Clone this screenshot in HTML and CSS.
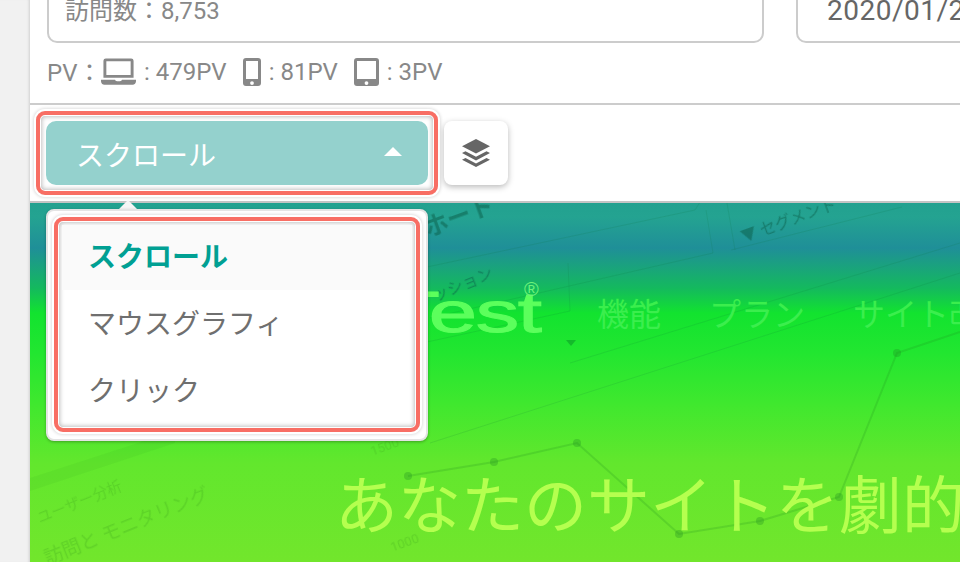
FILE: index.html
```html
<!DOCTYPE html>
<html lang="ja">
<head>
<meta charset="utf-8">
<title>ヒートマップ</title>
<link rel="stylesheet" href="styles.css">
</head>
<body>
<div class="page">
  <aside class="gutter"></aside>
  <main class="panel">
    <section class="summary">
      <div class="fields">
        <div class="field field-visits"><span class="field-text">訪問数：8,753</span></div>
        <div class="field field-date"><span class="field-text date-text">2020/01/25</span></div>
      </div>
      <div class="pv-row">
        <span class="pv-label">PV：</span>
        <svg class="ico ico-laptop" viewBox="0 0 36 28"><path fill="#888" fill-rule="evenodd" d="M5 0h26a2.500 2.500 0 0 1 2.500 2.500V20H2.500V2.500A2.500 2.500 0 0 1 5 0zm.5 3v14h25V3zM0 22h14.500c.3 1 1 1.500 2 1.500h3c1 0 1.700-.5 2-1.500H36v1.500c0 2-1.500 3.500-3.500 3.500h-29C1.500 27 0 25.500 0 23.500z"/></svg>
        <span class="pv-val">: 479PV</span>
        <svg class="ico ico-phone" viewBox="0 0 18 28"><path fill="#888" fill-rule="evenodd" d="M3 0h12a3 3 0 0 1 3 3v22a3 3 0 0 1-3 3H3a3 3 0 0 1-3-3V3a3 3 0 0 1 3-3zm0 3v18h12V3zm6 20.200a1.900 1.900 0 1 0 0 3.800 1.900 1.900 0 0 0 0-3.800z"/></svg>
        <span class="pv-val">: 81PV</span>
        <svg class="ico ico-tablet" viewBox="0 0 25 28"><path fill="#888" fill-rule="evenodd" d="M3 0h19a3 3 0 0 1 3 3v22a3 3 0 0 1-3 3H3a3 3 0 0 1-3-3V3a3 3 0 0 1 3-3zm0 3v18h19V3zm9.500 20.200a1.900 1.900 0 1 0 0 3.800 1.900 1.900 0 0 0 0-3.800z"/></svg>
        <span class="pv-val">: 3PV</span>
      </div>
    </section>
    <section class="toolbar">
      <div class="highlight highlight-select">
        <button class="select-btn" type="button">
          <span>スクロール</span>
          <span class="caret"></span>
        </button>
      </div>
      <button class="layers-btn" type="button" aria-label="レイヤー">
        <svg viewBox="0 0 30 28" width="30" height="28"><path fill="#666" d="M15 0l14 7.300-14 7.300L1 7.300z"/><path fill="#666" d="M4.500 12.200l10.500 5.500 10.500-5.500 3.500 1.900-14 7.300-14-7.300z"/><path fill="#666" d="M4.500 18.900l10.500 5.500 10.500-5.500 3.500 1.900L15 28 1 20.800z"/></svg>
      </button>
    </section>
    <section class="heatmap">
      <div class="heat-clip">
        <div class="shot s1">ホート</div>
        <div class="shot s2">▼ セグメント</div>
        <div class="shot s3">ッション</div>
        <div class="shot s4">ユーザー分析</div>
        <div class="shot s5">訪問と モニタリング</div>
        <div class="shot s6">1500</div>
        <div class="shot s7">1000</div>
        <svg class="chart" viewBox="0 0 930 359" width="930" height="359">
          <g fill="none" stroke="#0b6e3a" stroke-opacity=".14" stroke-width="1">
            <path d="M397 64L665 7L676 -10M676 7L683 50L400 115M701 47L872 4M705 47L697 0M400 240L930 70M300 160L540 108L538 60"/>
            <path d="M830 -5L930 -25M540 160L930 40"/>
          </g>
          <path d="M378 273L464 259L547 240L649 331L730 318L809 294L867 150L930 129" fill="none" stroke="#1f8a20" stroke-opacity=".2" stroke-width="2"/>
          <g fill="#1f8a20" fill-opacity=".3">
            <circle cx="378" cy="273" r="4"/><circle cx="464" cy="259" r="4"/><circle cx="547" cy="240" r="4"/><circle cx="649" cy="331" r="4"/><circle cx="730" cy="318" r="4"/><circle cx="809" cy="294" r="4"/><circle cx="867" cy="150" r="4"/>
          </g>
          <path d="M536 137h10l-5 6z" fill="#10a82a" fill-opacity=".7"/>
          <path d="M0 275L145 228V240L0 288z" fill="#1f8a20" fill-opacity=".07"/>
        </svg>
        <div class="site-logo">Test</div>
        <div class="site-reg">®</div>
        <nav class="site-nav"><span>機能</span><span>プラン</span><span>サイト改善</span></nav>
        <div class="site-headline">あなたのサイトを劇的に</div>
      </div>
      <div class="menu-arrow"></div>
      <div class="menu">
        <div class="highlight highlight-menu">
          <ul class="menu-list">
            <li class="menu-item is-active">スクロール</li>
            <li class="menu-item">マウスグラフィ</li>
            <li class="menu-item">クリック</li>
          </ul>
        </div>
      </div>
    </section>
  </main>
</div>
</body>
</html>
```
FILE: styles.css
```css
* { box-sizing: border-box; }
html, body { margin: 0; height: 100%; overflow: hidden; }
body {
  font-family: Roboto, "Noto Sans CJK JP", sans-serif;
  color: #888;
  background: #f1f1f1;
}
.page { display: flex; width: 960px; height: 562px; overflow: hidden; }
.gutter { width: 30px; flex: none; background: #f1f1f1; box-shadow: inset -3px 0 3px -2px #d0d0d0; }
.panel { flex: none; width: 930px; display: flex; flex-direction: column; background: #fff; }

.summary { height: 105px; flex: none; padding: 0 0 0 17px; border-bottom: 2px solid #ccc; overflow: hidden; }
.fields { display: flex; gap: 32px; height: 43px; margin-top: -18px; width: 1000px; }
.field {
  height: 61px; border: 2px solid #ccc; border-radius: 10px; display: flex; align-items: center;
  font-size: 24px;
}
.field-visits { width: 717px; padding: 0 0 4px 16px; }
.field-date { width: 240px; padding: 0 0 4px 29px; }
.field-text { color: #888; line-height: 30px; white-space: nowrap; }
.date-text { color: #666; font-size: 28px; letter-spacing: .5px; }
.pv-row { display: flex; align-items: center; height: 30px; margin-top: 32px; font-size: 24px; color: #888; white-space: nowrap; }
.pv-label { width: 54px; margin-bottom: 4px; }
.ico { flex: none; }
.ico-laptop { width: 35px; height: 28px; margin-right: 8px; }
.ico-phone { width: 18px; height: 28px; margin: 0 8px 0 16px; }
.ico-tablet { width: 25px; height: 28px; margin: 0 8px 0 16px; }

.toolbar { height: 98px; flex: none; display: flex; align-items: center; gap: 6px; padding: 0 0 0 6px; background: #fff; border-bottom: 2px solid #c4c4c4; position: relative; z-index: 2; }
.highlight {
  border: 4px solid #f86e64; border-radius: 9px;
  box-shadow: 0 0 0 2px #fff, 0 0 3px 3px rgba(0,0,0,.12), inset 0 0 0 1px #fff, inset 0 0 4px 2px rgba(0,0,0,.25);
}
.highlight-select { padding: 6px; width: 402px; height: 84px; margin-top: -1px; flex: none; }
.select-btn {
  width: 100%; height: 100%; margin: 0; border: 0; border-radius: 10px; background: #94d1cd;
  display: flex; justify-content: space-between; align-items: center; padding: 2px 26px 0 30px;
  color: #fff; font: 400 28px Roboto, "Noto Sans CJK JP", sans-serif;
}
.caret { width: 0; height: 0; border-left: 9px solid transparent; border-right: 9px solid transparent; border-bottom: 9px solid #fff; margin-top: -5px; }
.layers-btn { width: 64px; height: 64px; margin: 0; border: 0; padding: 0; background: #fff; border-radius: 8px; box-shadow: 0 2px 6px rgba(0,0,0,.28); display: flex; align-items: center; justify-content: center; flex: none; }

.heatmap { flex: 1; position: relative; }
.heat-clip {
  position: absolute; inset: 0; overflow: hidden;
  background: linear-gradient(180deg, #22a18f 0, #24a391 14px, #1f8f98 45px, #14b95e 85px, #12e32f 110px, #22e630 150px, #3fe82e 200px, #62e72d 260px, #72e62c 359px);
}
.shot { position: absolute; color: #0b5d48; opacity: .5; white-space: nowrap; filter: blur(.5px); }
.s1 { left: 392px; top: -6px; font-size: 24px; font-weight: 700; transform: rotate(-20deg); }
.s2 { left: 708px; top: 4px; font-size: 16px; transform: rotate(-20deg); }
.s3 { left: 400px; top: 68px; font-size: 16px; transform: rotate(-22deg); }
.s4 { left: 4px; top: 287px; font-size: 15px; color: #3fa81e; opacity: .3; transform: rotate(-22deg); }
.s5 { left: 8px; top: 308px; font-size: 19px; color: #3fa81e; opacity: .3; transform: rotate(-22deg); }
.s6 { left: 340px; top: 236px; font-size: 13px; color: #3fa81e; opacity: .3; transform: rotate(-20deg); }
.s7 { left: 360px; top: 332px; font-size: 13px; color: #3fa81e; opacity: .3; transform: rotate(-20deg); }
.chart { position: absolute; left: 0; top: 0; }
.site-logo { position: absolute; right: 420px; top: 73px; color: #5cff5c; font: 400 58px "Liberation Sans", sans-serif; line-height: 72px; letter-spacing: -1px; -webkit-text-stroke: 1px #5cff5c; transform: scaleX(1.5); transform-origin: right; }
.site-reg { position: absolute; left: 494px; top: 74px; color: #6cf27a; font: 400 20px "Liberation Sans", sans-serif; line-height: 24px; }
.site-nav { position: absolute; left: 567px; top: 91px; display: flex; gap: 48px; color: #3bee4d; font-size: 32px; line-height: 42px; white-space: nowrap; }
.site-headline { position: absolute; left: 305px; top: 266px; color: #b5ff4f; font-size: 63px; line-height: 76px; white-space: nowrap; }
.menu-arrow { position: absolute; left: 88px; top: -3px; width: 0; height: 0; border-left: 10px solid transparent; border-right: 10px solid transparent; border-bottom: 10px solid #f6f6f6; z-index: 3; }
.menu { position: absolute; left: 16px; top: 6px; width: 382px; height: 232px; background: #fff; border-radius: 8px; border: 2px solid #e4e4e4; padding: 6px 6px 7px; box-shadow: 0 1px 3px rgba(0,0,0,.3); z-index: 3; }
.highlight-menu { height: 100%; padding: 4px; }
.menu-list { list-style: none; margin: 0; padding: 0; }
.menu-item { height: 67px; padding-left: 26px; font-size: 28px; line-height: 69px; color: #6f6f6f; }
.is-active { height: 65px; line-height: 65px; background: #fafafa; color: #00a093; font-weight: 700; }
```
